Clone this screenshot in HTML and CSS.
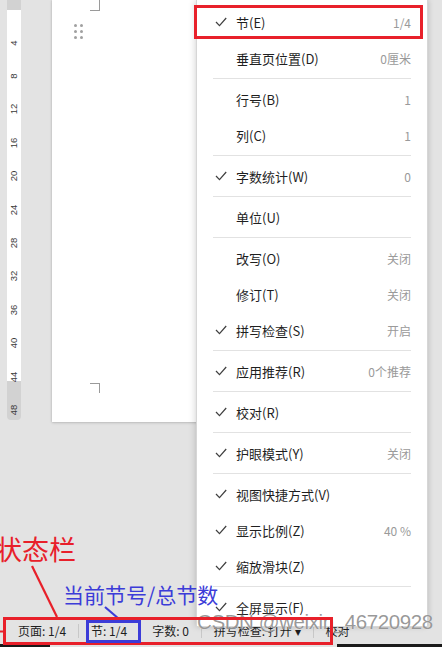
FILE: index.html
```html
<!DOCTYPE html>
<html lang="zh">
<head>
<meta charset="utf-8">
<link rel="stylesheet" href="styles.css">
</head>
<body>
<div class="workspace">
  <div class="ruler">
    <span class="tick"><i>4</i></span>
    <span class="tick"><i>8</i></span>
    <span class="tick"><i>12</i></span>
    <span class="tick"><i>16</i></span>
    <span class="tick"><i>20</i></span>
    <span class="tick"><i>24</i></span>
    <span class="tick"><i>28</i></span>
    <span class="tick"><i>32</i></span>
    <span class="tick"><i>36</i></span>
    <span class="tick"><i>40</i></span>
    <span class="tick"><i>44</i></span>
    <span class="tick"><i>48</i></span>
  </div>
  <div class="page">
    <div class="corner-top"></div>
    <div class="drag-dots"><b></b><b></b><b></b><b></b><b></b><b></b></div>
    <div class="corner-bottom"></div>
  </div>
</div>
<div class="statusbar">
  <span class="sb-item">页面: 1/4</span>
  <span class="sb-div"></span>
  <span class="sb-item">节: 1/4</span>
  <span class="sb-div"></span>
  <span class="sb-item">字数: 0</span>
  <span class="sb-div"></span>
  <span class="sb-item">拼写检查: 打开 ▾</span>
  <span class="sb-div"></span>
  <span class="sb-item">校对</span>
</div>
<div class="taskbar"><span class="tb-left"></span><span class="tb-right"></span></div>

<div class="menu">
  <div class="row"><span class="chk"><svg width="12" height="10" viewBox="0 0 12 10"><polyline points="1,5 4.5,8.6 11.2,1" /></svg></span><span class="lbl">节(E)</span><span class="val">1/4</span></div>
  <div class="row"><span class="chk"></span><span class="lbl">垂直页位置(D)</span><span class="val">0厘米</span></div>
  <div class="sep"></div>
  <div class="row"><span class="chk"></span><span class="lbl">行号(B)</span><span class="val">1</span></div>
  <div class="row"><span class="chk"></span><span class="lbl">列(C)</span><span class="val">1</span></div>
  <div class="sep"></div>
  <div class="row"><span class="chk"><svg width="12" height="10" viewBox="0 0 12 10"><polyline points="1,5 4.5,8.6 11.2,1" /></svg></span><span class="lbl">字数统计(W)</span><span class="val">0</span></div>
  <div class="sep"></div>
  <div class="row"><span class="chk"></span><span class="lbl">单位(U)</span><span class="val"></span></div>
  <div class="sep"></div>
  <div class="row"><span class="chk"></span><span class="lbl">改写(O)</span><span class="val">关闭</span></div>
  <div class="row"><span class="chk"></span><span class="lbl">修订(T)</span><span class="val">关闭</span></div>
  <div class="row"><span class="chk"><svg width="12" height="10" viewBox="0 0 12 10"><polyline points="1,5 4.5,8.6 11.2,1" /></svg></span><span class="lbl">拼写检查(S)</span><span class="val">开启</span></div>
  <div class="sep"></div>
  <div class="row"><span class="chk"><svg width="12" height="10" viewBox="0 0 12 10"><polyline points="1,5 4.5,8.6 11.2,1" /></svg></span><span class="lbl">应用推荐(R)</span><span class="val">0个推荐</span></div>
  <div class="sep"></div>
  <div class="row"><span class="chk"><svg width="12" height="10" viewBox="0 0 12 10"><polyline points="1,5 4.5,8.6 11.2,1" /></svg></span><span class="lbl">校对(R)</span><span class="val"></span></div>
  <div class="sep"></div>
  <div class="row"><span class="chk"><svg width="12" height="10" viewBox="0 0 12 10"><polyline points="1,5 4.5,8.6 11.2,1" /></svg></span><span class="lbl">护眼模式(Y)</span><span class="val">关闭</span></div>
  <div class="sep"></div>
  <div class="row"><span class="chk"><svg width="12" height="10" viewBox="0 0 12 10"><polyline points="1,5 4.5,8.6 11.2,1" /></svg></span><span class="lbl">视图快捷方式(V)</span><span class="val"></span></div>
  <div class="row"><span class="chk"><svg width="12" height="10" viewBox="0 0 12 10"><polyline points="1,5 4.5,8.6 11.2,1" /></svg></span><span class="lbl">显示比例(Z)</span><span class="val">40 %</span></div>
  <div class="row"><span class="chk"><svg width="12" height="10" viewBox="0 0 12 10"><polyline points="1,5 4.5,8.6 11.2,1" /></svg></span><span class="lbl">缩放滑块(Z)</span><span class="val"></span></div>
  <div class="sep"></div>
  <div class="row"><span class="chk"><svg width="12" height="10" viewBox="0 0 12 10"><polyline points="1,5 4.5,8.6 11.2,1" /></svg></span><span class="lbl">全屏显示(F)</span><span class="val"></span></div>
</div>

<div class="watermark">CSDN @weixin_46720928</div>

<svg class="leaders" width="442" height="647" viewBox="0 0 442 647">
  <line x1="32" y1="566" x2="57" y2="617" stroke="#e8202a" stroke-width="2.2"/>
  <line x1="0" y1="631.5" x2="4" y2="631.5" stroke="#e8202a" stroke-width="2"/>
  <line x1="105" y1="607" x2="119" y2="619" stroke="#3c3cd8" stroke-width="2.2"/>
</svg>
<div class="note-red">状态栏</div>
<div class="note-blue">当前节号/总节数</div>
<div class="box-item"></div>
<div class="box-status"></div>
<div class="box-section"></div>
</body>
</html>
```
FILE: styles.css
```css
html, body {
  margin: 0;
  padding: 0;
}
body {
  width: 442px;
  height: 647px;
  overflow: hidden;
  position: relative;
  background: #e3e3e3;
  display: flex;
  flex-direction: column;
  font-family: "Noto Sans CJK SC", "Noto Sans", sans-serif;
  color: #222;
}

.workspace {
  height: 617px;
  display: flex;
  align-items: flex-start;
  padding-left: 7px;
  gap: 31px;
}

.ruler {
  width: 14px;
  height: 420px;
  box-sizing: border-box;
  padding-top: 26px;
  border-radius: 0 0 4px 4px;
  background: linear-gradient(to bottom, #d2d2d2 0, #d2d2d2 10px, #ffffff 10px, #ffffff 381px, #d2d2d2 381px);
  display: flex;
  flex-direction: column;
}
.tick {
  height: 33.4px;
  display: flex;
  align-items: center;
  justify-content: center;
  flex: none;
}
.tick i {
  font-style: normal;
  font-family: "Liberation Sans", Arial, sans-serif;
  font-size: 9.5px;
  color: #3a3a3a;
  transform: rotate(-90deg);
  display: block;
  line-height: 10px;
}

.page {
  width: 170px;
  height: 422px;
  background: #fff;
  box-shadow: 0 0 2px rgba(0, 0, 0, 0.18), 0 1px 3px rgba(0, 0, 0, 0.12);
  display: flex;
  flex-direction: column;
  flex: none;
}
.corner-top {
  width: 10px;
  height: 11px;
  margin-left: 38px;
  box-sizing: border-box;
  border-right: 1px solid #9a9a9a;
  border-bottom: 1px solid #9a9a9a;
}
.drag-dots {
  margin-left: 22px;
  margin-top: 13px;
  width: 9px;
  display: grid;
  grid-template-columns: 3px 3px;
  column-gap: 3px;
  row-gap: 3px;
}
.drag-dots b {
  width: 3px;
  height: 3px;
  border-radius: 50%;
  background: #a0a0a0;
}
.corner-bottom {
  margin-top: auto;
  margin-bottom: 29px;
  margin-left: 38px;
  width: 10px;
  height: 10px;
  box-sizing: border-box;
  border-top: 1px solid #9a9a9a;
  border-right: 1px solid #9a9a9a;
}

.statusbar {
  height: 27px;
  display: flex;
  align-items: center;
  gap: 12px;
  padding-left: 18px;
  font-size: 12px;
  color: #1e1e1e;
  background: #e3e3e3;
}
.sb-item {
  white-space: nowrap;
  line-height: 16px;
}
.sb-div {
  width: 1px;
  height: 14px;
  background: #c8c8c8;
}
.taskbar {
  height: 3px;
  display: flex;
  justify-content: space-between;
}
.tb-left {
  width: 50px;
  background: #1a1a1a;
}
.tb-right {
  width: 105px;
  background: #1a1a1a;
}

.menu {
  position: absolute;
  left: 196px;
  top: 0;
  width: 232px;
  height: 627px;
  box-sizing: border-box;
  padding-top: 4px;
  background: #fff;
  border: 1px solid #d6d6d6;
  border-top: none;
  box-shadow: -2px 0 6px rgba(0, 0, 0, 0.12), 2px 0 5px rgba(0, 0, 0, 0.08);
  z-index: 2;
}
.row {
  height: 36px;
  display: flex;
  align-items: center;
}
.chk {
  width: 39px;
  box-sizing: border-box;
  padding-left: 18px;
  display: flex;
  align-items: center;
  flex: none;
}
.chk svg polyline {
  fill: none;
  stroke: #404040;
  stroke-width: 1.25;
}
.lbl {
  flex: 1;
  font-size: 13px;
  color: #1f1f1f;
  white-space: nowrap;
}
.val {
  padding-right: 16px;
  font-size: 12px;
  color: #9a9a9a;
  white-space: nowrap;
}
.sep {
  height: 1px;
  margin: 2px 16px 2px 16px;
  background: #e2e2e2;
}

.watermark {
  position: absolute;
  left: 197px;
  top: 610px;
  font-family: "Liberation Sans", Arial, sans-serif;
  font-size: 20.5px;
  letter-spacing: -0.4px;
  color: rgba(120, 120, 120, 0.75);
  text-shadow: 0 0 1px rgba(255, 255, 255, 0.9);
  z-index: 3;
  white-space: nowrap;
}

.leaders {
  position: absolute;
  left: 0;
  top: 0;
  z-index: 4;
  pointer-events: none;
}
.note-red {
  position: absolute;
  left: -5px;
  top: 531px;
  font-size: 27px;
  line-height: 36px;
  color: #e8202a;
  z-index: 4;
  white-space: nowrap;
}
.note-blue {
  position: absolute;
  left: 63px;
  top: 580px;
  font-size: 21px;
  line-height: 28px;
  color: #3c3cd8;
  z-index: 4;
  white-space: nowrap;
}
.box-item {
  position: absolute;
  left: 194px;
  top: 5px;
  width: 229px;
  height: 34px;
  box-sizing: border-box;
  border: 3px solid #e8202a;
  z-index: 4;
}
.box-status {
  position: absolute;
  left: 3px;
  top: 617px;
  width: 330px;
  height: 28px;
  box-sizing: border-box;
  border: 3px solid #e8202a;
  z-index: 4;
}
.box-section {
  position: absolute;
  left: 86px;
  top: 620px;
  width: 55px;
  height: 23px;
  box-sizing: border-box;
  border: 3px solid #3c3cd8;
  z-index: 5;
}
```
